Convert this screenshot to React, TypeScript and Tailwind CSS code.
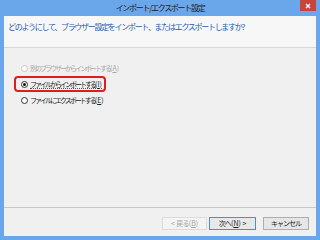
const jp = { fontFamily: '"Noto Sans CJK JP", "Noto Sans", sans-serif' }

function Radio({ checked, disabled }: { checked?: boolean; disabled?: boolean }) {
  return (
    <span
      className={`w-[7px] h-[7px] rounded-full border flex items-center justify-center shrink-0 bg-white ${
        disabled ? 'border-[#c4c4c4]' : 'border-[#333333]'
      }`}
    >
      {checked && <span className="w-[3px] h-[3px] rounded-full bg-[#111111]" />}
    </span>
  )
}

// access key label: "(X)" with the letter underlined, normal spacing
function Key({ k }: { k: string }) {
  return (
    <span className="tracking-normal">
      (<span className="underline">{k}</span>)
    </span>
  )
}

export default function App() {
  return (
    <div
      className="w-[320px] h-[240px] bg-[#6aa6ea] flex flex-col px-[4px] pb-[4px] overflow-hidden"
      style={jp}
    >
      {/* title bar */}
      <div className="h-[16px] shrink-0 flex items-start relative">
        <div className="flex-1 text-center text-[8px] leading-[16px] tracking-[-1.3px] text-[#1a1a1a] whitespace-nowrap">
          インポート/エクスポート設定
        </div>
        <div className="absolute right-0 top-0 w-[16px] h-[11px] bg-[#c8453e] flex items-center justify-center">
          <svg width="6" height="6" viewBox="0 0 6 6">
            <path d="M1 1L5 5M5 1L1 5" stroke="white" strokeWidth="1.3" />
          </svg>
        </div>
      </div>

      <div className="flex-1 flex flex-col bg-[#f0f0f0]">
        {/* header */}
        <div className="h-[32px] shrink-0 bg-[#f7f7f7] border-b border-[#d8d8d8] pl-[4px] pt-[6px]">
          <div className="text-[8px] leading-[10px] tracking-[-1.3px] text-[#1f5cae] whitespace-nowrap">
            どのようにして、ブラウザー設定をインポート、またはエクスポートしますか?
          </div>
        </div>

        {/* options */}
        <div className="flex-1 flex flex-col items-start pl-[10px] pt-[12px]">
          <div className="h-[16px] flex items-center gap-[2px] pl-[5px] border-2 border-transparent text-[7px] tracking-[-2px] text-[#a8a8a8] whitespace-nowrap">
            <Radio disabled />
            <span>
              別のブラウザーからインポートする<Key k="A" />
            </span>
          </div>
          <div className="h-[16px] flex items-center gap-[2px] pl-[5px] pr-[2px] border-2 border-[#dd1f22] rounded-[4px] text-[7px] tracking-[-2px] text-[#1a1a1a] whitespace-nowrap">
            <Radio checked />
            <span className="border-b border-dotted border-[#555555] leading-[8px]">
              ファイルからインポートする<Key k="I" />
            </span>
          </div>
          <div className="h-[16px] flex items-center gap-[2px] pl-[5px] border-2 border-transparent text-[7px] tracking-[-2px] text-[#1a1a1a] whitespace-nowrap">
            <Radio />
            <span>
              ファイルにエクスポートする<Key k="E" />
            </span>
          </div>
        </div>

        {/* footer */}
        <div className="h-[29px] shrink-0 border-t border-[#c8c8c8] flex items-start justify-end pt-[9px] pr-[7px]">
          <div className="w-[45px] h-[13px] border border-[#dcdcdc] bg-[#f4f4f4] flex items-center justify-center text-[7px] tracking-[-0.8px] text-[#a6a6a6] whitespace-nowrap">
            <span className="tracking-normal">&lt;&nbsp;</span>戻る<Key k="B" />
          </div>
          <div className="w-[47px] h-[13px] border border-[#4a8fd0] bg-[#e8e8e8] flex items-center justify-center text-[7px] tracking-[-0.8px] text-[#1a1a1a] ml-[2px] whitespace-nowrap">
            次へ<Key k="N" />
            <span className="tracking-normal">&nbsp;&gt;</span>
          </div>
          <div className="w-[46px] h-[13px] border border-[#adadad] bg-[#e6e6e6] flex items-center justify-center text-[7px] tracking-[-1px] text-[#1a1a1a] ml-[7px] whitespace-nowrap">
            キャンセル
          </div>
        </div>
      </div>
    </div>
  )
}
